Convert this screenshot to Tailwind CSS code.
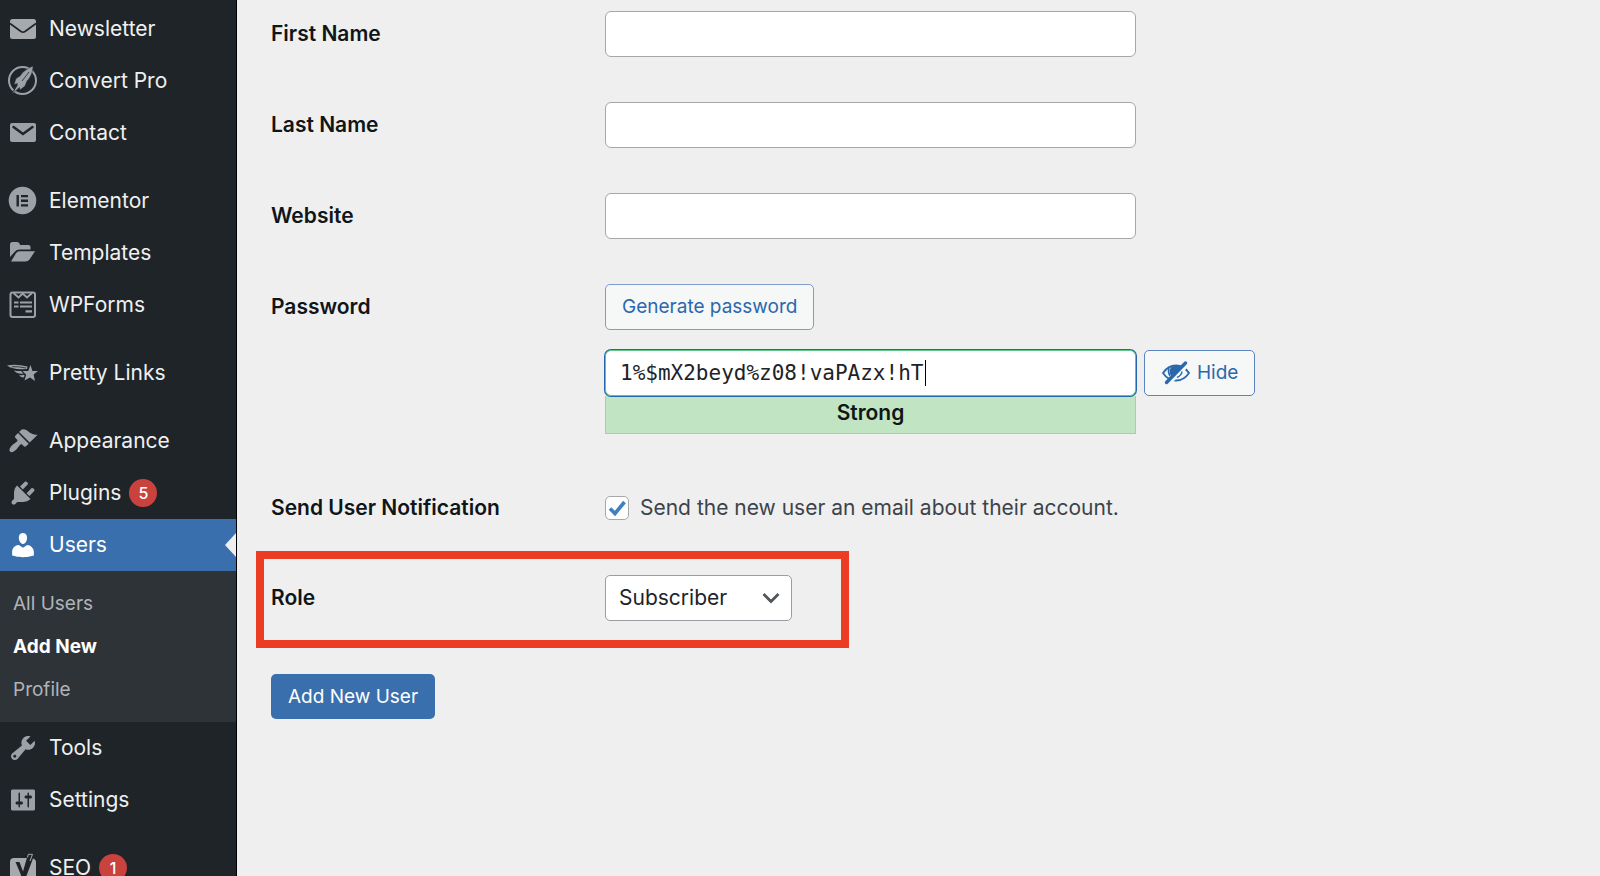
<!DOCTYPE html>
<html lang="en">
<head>
<meta charset="utf-8">
<title>Add New User</title>
<script src="https://cdn.jsdelivr.net/npm/@tailwindcss/browser@4"></script>
</head>
<body class="flex h-screen overflow-hidden bg-[#efefef] font-[Inter,sans-serif] text-[21px] leading-7 text-[#3c434a]">

<nav aria-label="Admin menu" class="flex w-[237px] shrink-0 flex-col gap-4 overflow-hidden border-r border-black bg-[#1f2428] pt-[3px] text-[#f0f0f1]">
  <ul>
    <li><a href="#" class="flex h-[52px] items-center gap-[11px] pl-2">
      <svg class="size-[30px] shrink-0" viewBox="0 0 30 30"><rect x="2" y="5" width="26" height="20" rx="2.5" fill="#a7aaad"/><path d="M2 9.5 13 17.5Q15 18.8 17 17.5L28 9.5" fill="none" stroke="#1f2428" stroke-width="1.6"/></svg>
      Newsletter</a></li>
    <li><a href="#" class="flex h-[52px] items-center gap-[11px] pl-2">
      <svg class="size-[30px] shrink-0 overflow-visible" viewBox="0 0 30 30"><circle cx="14.5" cy="14.5" r="13.5" fill="none" stroke="#9ca1a7" stroke-width="2"/><path d="M25 0C20 2 15 5 12 10L8 12.500 6 18.500 9.500 17.500 8.500 20 4 28 11.500 21.500 12 24 17 20 19 15C23 11 25 5 25 0Z" fill="#9ca1a7" stroke="#1f2428" stroke-width=".5"/><path d="M21 6 14 15M9.500 19 5.500 25" stroke="#1f2428" stroke-width=".8"/></svg>
      Convert Pro</a></li>
    <li><a href="#" class="flex h-[52px] items-center gap-[11px] pl-2">
      <svg class="size-[30px] shrink-0" viewBox="0 0 30 30"><rect x="2" y="5" width="26" height="19" rx="2" fill="#9ca1a7"/><path d="M5.500 9 15 16 24.500 9" fill="none" stroke="#1f2428" stroke-width="2.500" stroke-linecap="round"/></svg>
      Contact</a></li>
  </ul>
  <ul>
    <li><a href="#" class="flex h-[52px] items-center gap-[11px] pl-2">
      <svg class="size-[30px] shrink-0" viewBox="0 0 30 30"><circle cx="14.500" cy="14.500" r="13.800" fill="#9ca1a7"/><path d="M8.500 9h2.400v11.500H8.500zM13 9h7v2.300h-7zM13 13.600h7v2.300h-7zM13 18.200h7v2.300h-7z" fill="#1f2428"/></svg>
      Elementor</a></li>
    <li><a href="#" class="flex h-[52px] items-center gap-[11px] pl-2">
      <svg class="size-[30px] shrink-0" viewBox="0 0 30 30"><path d="M2 19V6.500Q2 4 4.500 4H9q2 0 2.500 1.500L12 7h8.500Q22.500 7 22.500 9v2.500H11.500Q8.500 11.500 7 13.500Z" fill="#9ca1a7"/><path d="M3 23.500 8 15.300Q9.300 13.300 11.500 13.300H27L21.500 21.500Q20 23.500 17.500 23.500Z" fill="#9ca1a7"/></svg>
      Templates</a></li>
    <li><a href="#" class="flex h-[52px] items-center gap-[11px] pl-2">
      <svg class="size-[30px] shrink-0" viewBox="0 0 30 30" fill="none" stroke="#9ca1a7" stroke-width="2"><rect x="2.500" y="2.500" width="24.500" height="24.500" rx="2"/><path d="M5.500 3 10.500 7.500 14.700 3.500 19 7.500 24 3"/><path d="M6 12.500h4.500M12 12.500h12M6 16.500h4.500M12 16.500h12M17.500 21.300h6.500" stroke-width="2.200"/></svg>
      WPForms</a></li>
  </ul>
  <ul>
    <li><a href="#" class="flex h-[52px] items-center gap-[11px] pl-2">
      <svg class="size-[30px] shrink-0 overflow-visible" viewBox="0 0 30 30" fill="#9ca1a7"><path d="M22.500 7 24.400 13 30 13 25.600 16.600 27 23 22 19.400 16.500 22.500 18.200 16.700 14.500 13 20.200 13Z"/><path d="M-1 7.500Q8 5.500 19.500 8.500L19 11 14 11.200Q5 11.500-1 7.500ZM6 12.500Q10 13.200 13 13L15.500 15.500Q9.500 16.500 6 12.500ZM11 17Q13.500 17.500 16.500 16.800L16 19.500Q12.500 19.500 11 17Z"/><path d="M4 8.700Q10 8.300 18 10" fill="none" stroke="#1f2428" stroke-width=".8"/></svg>
      Pretty Links</a></li>
  </ul>
  <ul>
    <li><a href="#" class="flex h-[52px] items-center gap-[11px] pl-2">
      <svg class="size-[30px] shrink-0" viewBox="0 0 20 20" fill="#9ca1a7"><path d="M14.480 11.060L7.410 3.990l1.500-1.500c.5-.56 2.300-.47 3.510.32 1.210.8 1.430 1.280 2.910 2.100 1.180.64 2.450 1.260 4.450.85zm-.71.71L6.700 4.700 4.930 6.470c-.39.39-.39 1.020 0 1.410l1.060 1.060c.39.39.39 1.030 0 1.420-.6.6-1.430 1.110-2.210 1.690-.35.26-.7.53-1.010.84C1.430 14.230.4 16.080 1.400 17.070c.99 1 2.840-.03 4.180-1.360.31-.31.58-.66.85-1.020.57-.78 1.080-1.610 1.690-2.210.39-.39 1.020-.39 1.410 0l1.060 1.060c.39.39 1.020.39 1.410 0z"/></svg>
      Appearance</a></li>
    <li><a href="#" class="flex h-[52px] items-center gap-[11px] pl-2">
      <svg class="size-[30px] shrink-0" viewBox="0 0 20 20" fill="#9ca1a7"><path d="M13.110 4.360L9.870 7.600 8 5.730l3.240-3.240c.35-.34 1.050-.2 1.560.32.52.51.66 1.210.31 1.550zm-8 1.770l.91-1.120 9.010 9.010-1.190.84c-.71.71-2.630 1.160-3.820 1.160H6.140L4.900 17.260c-.59.59-1.540.59-2.120 0-.59-.58-.59-1.530 0-2.120l1.240-1.240v-3.880c0-1.130.4-3.190 1.090-3.890zm7.260 3.970l3.240-3.240c.34-.35 1.040-.21 1.550.31.52.51.66 1.210.31 1.550l-3.240 3.250z"/></svg>
      <span class="flex items-center gap-2">Plugins <span class="flex size-7 items-center justify-center rounded-full bg-[#c9423e] text-base font-medium text-white">5</span></span></a></li>
    <li>
      <a href="#" aria-current="true" class="relative flex h-[52px] items-center gap-[11px] bg-[#3a6fad] pl-2 text-white">
      <svg class="size-[30px] shrink-0" viewBox="0 0 20 20" fill="currentColor"><path d="M10 9.250c-2.270 0-2.730-3.440-2.730-3.440C7 4.020 7.820 2 9.970 2c2.160 0 2.980 2.020 2.710 3.810 0 0-.41 3.440-2.680 3.440zm0 2.570L12.720 10c2.390 0 4.520 2.330 4.520 4.530v2.490s-3.650 1.130-7.240 1.130c-3.650 0-7.240-1.130-7.240-1.130v-2.490c0-2.250 1.940-4.480 4.470-4.480z"/></svg>
      Users
      <svg class="absolute top-[14px] right-0 h-6 w-[11px]" viewBox="0 0 11 24" fill="#efefef"><path d="M11 0v24L0 12z"/></svg></a>
      <ul class="flex flex-col bg-[#2e3338] px-[13px] py-[11px] text-[19px] text-[#b0b4b8]">
        <li><a href="#" class="flex h-[43px] items-center">All Users</a></li>
        <li><a href="#" aria-current="page" class="flex h-[43px] items-center font-bold text-white">Add New</a></li>
        <li><a href="#" class="flex h-[43px] items-center">Profile</a></li>
      </ul>
    </li>
    <li><a href="#" class="flex h-[52px] items-center gap-[11px] pl-2">
      <svg class="size-[30px] shrink-0" viewBox="0 0 20 20" fill="#9ca1a7"><path d="M16.680 9.770c-1.340 1.340-3.300 1.670-4.950.99l-5.410 6.520c-.99.99-2.590.99-3.580 0s-.99-2.590 0-3.570l6.520-5.420c-.68-1.650-.35-3.610.99-4.950 1.280-1.280 3.120-1.620 4.720-1.060l-2.890 2.890 2.820 2.820 2.860-2.870c.53 1.580.18 3.390-1.080 4.650zM3.810 16.210c.4.39 1.040.39 1.430 0 .4-.4.4-1.040 0-1.430-.39-.4-1.030-.4-1.430 0-.39.39-.39 1.030 0 1.430z"/></svg>
      Tools</a></li>
    <li><a href="#" class="flex h-[52px] items-center gap-[11px] pl-2">
      <svg class="size-[30px] shrink-0" viewBox="0 0 20 20" fill="#9ca1a7"><path d="M18 16V4c0-.55-.45-1-1-1H3c-.55 0-1 .45-1 1v12c0 .55.45 1 1 1h14c.55 0 1-.45 1-1zM8 11h1c.55 0 1 .45 1 1s-.45 1-1 1H8v1.500c0 .28-.22.5-.5.5s-.5-.22-.5-.5V13H6c-.55 0-1-.45-1-1s.45-1 1-1h1V5.500c0-.28.22-.5.5-.5s.5.22.5.5V11zm5-2h-1c-.55 0-1-.45-1-1s.45-1 1-1h1V5.500c0-.28.22-.5.5-.5s.5.22.5.5V7h1c.55 0 1 .45 1 1s-.45 1-1 1h-1v5.500c0 .28-.22.5-.5.5s-.5-.22-.5-.5V9z"/></svg>
      Settings</a></li>
  </ul>
  <ul>
    <li><a href="#" class="flex h-[52px] items-center gap-[11px] pl-2">
      <svg class="size-[30px] shrink-0" viewBox="0 0 30 30"><path d="M6 5H21L13 30H2V9Q2 5 6 5ZM25 5.500Q28 6.500 28 9V30H15.500Q17 27 18 24Z" fill="#a7aaad"/><path d="M20 1H24.500L16.500 22Q14.500 28 9.500 29V25.500Q12.500 25 13 22L7.500 9H11.500L15 18.500Z" fill="#1f2428"/><path d="M19.500 4.500 20.300 1.300H24.500L22 8" fill="none" stroke="#a7aaad" stroke-width="1"/></svg>
      <span class="flex items-center gap-2">SEO <span class="flex size-7 items-center justify-center rounded-full bg-[#c9423e] text-base font-medium text-white">1</span></span></a></li>
  </ul>
</nav>

<main class="min-w-0 flex-1 pt-[11px] pr-6 pl-[34px]">
  <form>
    <div class="mb-[45px] flex h-[46px] items-center">
      <label for="first" class="w-[334px] shrink-0 font-semibold text-[#101517]">First Name</label>
      <input id="first" type="text" class="h-full w-full max-w-[531px] rounded-md border border-[#a5a7aa] bg-white px-3.5">
    </div>
    <div class="mb-[45px] flex h-[46px] items-center">
      <label for="last" class="w-[334px] shrink-0 font-semibold text-[#101517]">Last Name</label>
      <input id="last" type="text" class="h-full w-full max-w-[531px] rounded-md border border-[#a5a7aa] bg-white px-3.5">
    </div>
    <div class="mb-[45px] flex h-[46px] items-center">
      <label for="site" class="w-[334px] shrink-0 font-semibold text-[#101517]">Website</label>
      <input id="site" type="url" class="h-full w-full max-w-[531px] rounded-md border border-[#a5a7aa] bg-white px-3.5">
    </div>
    <div class="flex items-start">
      <label for="pass" class="w-[334px] shrink-0 py-[9px] font-semibold text-[#101517]">Password</label>
      <div class="min-w-0 flex-1">
        <button type="button" class="block h-[46px] rounded-[5px] border border-[#7f9ccc] bg-[#f6f7f7] px-4 text-[19px] text-[#2a68ae]">Generate password</button>
        <div class="mt-5 flex items-start gap-2">
          <div class="w-full max-w-[531px]">
            <div class="relative">
              <input id="pass" type="text" value="1%$mX2beyd%z08!vaPAzx!hT" spellcheck="false" class="relative block h-[46px] w-full rounded-md border border-[#5fc987] bg-white px-3.5 font-['DejaVu_Sans_Mono',monospace] text-[21px] text-[#1d2327] ring-1 ring-[#2466ac] outline-none">
              <span class="absolute top-[10px] left-[320px] h-[26px] w-px bg-black"></span>
            </div>
            <div class="flex h-[38px] items-center justify-center border border-t-0 border-[#98d99b] bg-[#c1e5c3] pb-1 font-semibold text-[#101517]">Strong</div>
          </div>
          <button type="button" class="flex h-[46px] shrink-0 items-center gap-1.5 rounded-[5px] border border-[#5a84bd] bg-[#f6f7f7] px-4 text-[19px] text-[#2a68ae]">
            <svg class="size-[30px]" viewBox="0 0 30 30" fill="none" stroke="currentColor"><path d="M2 15Q7 7.500 15 7.500T28 15Q23 22.500 15 22.500T2 15Z" stroke-width="1.800"/><circle cx="14.500" cy="13.500" r="6" fill="currentColor" stroke="none"/><path d="M8 10Q6.500 14 9 18" stroke-width="1.500"/><path d="M7 26.500 27 6.500" stroke="#f6f7f7" stroke-width="3.500"/><path d="M21 13.500Q20.500 17.500 16 19.500" stroke-width="1.500"/><path d="M5.500 24.500 24.500 5" stroke-width="3.400" stroke-linecap="round"/></svg>
            Hide</button>
        </div>
      </div>
    </div>
    <div class="mt-[51px] flex h-[46px] items-center">
      <span class="w-[334px] shrink-0 font-semibold text-[#101517]">Send User Notification</span>
      <label for="notify" class="flex items-center gap-[11px]">
        <span class="relative size-6">
          <input id="notify" type="checkbox" checked class="block size-6 appearance-none rounded-[5px] border border-[#a5a7aa] bg-white">
          <svg class="pointer-events-none absolute inset-0 size-6" viewBox="0 0 24 24" fill="none" stroke="#3f7fc4" stroke-width="3.600"><path d="M5 12.500 10 17.500 19.500 6"/></svg>
        </span>
        Send the new user an email about their account.</label>
    </div>
    <div class="relative mt-[44px] flex h-[46px] items-center">
      <label for="role" class="w-[334px] shrink-0 font-semibold text-[#101517]">Role</label>
      <div class="relative h-full w-[187px]">
        <select id="role" class="size-full appearance-none rounded-[5px] border border-[#9a9da1] bg-white pl-[13px] text-[#1d2327]">
          <option>Subscriber</option>
        </select>
        <svg class="pointer-events-none absolute top-4 right-3 h-[14px] w-[18px]" viewBox="0 0 18 14" fill="none" stroke="#50565c" stroke-width="2.800"><path d="M1.500 3 9 10.500 16.500 3"/></svg>
      </div>
      <div class="pointer-events-none absolute -top-6 -bottom-[27px] -left-[15px] w-[593px] border-8 border-[#ea3d23]"></div>
    </div>
    <button type="submit" class="mt-[53px] h-[45px] rounded-[5px] bg-[#3a6fad] px-[17px] text-[19px] text-white">Add New User</button>
  </form>
</main>
</body>
</html>
